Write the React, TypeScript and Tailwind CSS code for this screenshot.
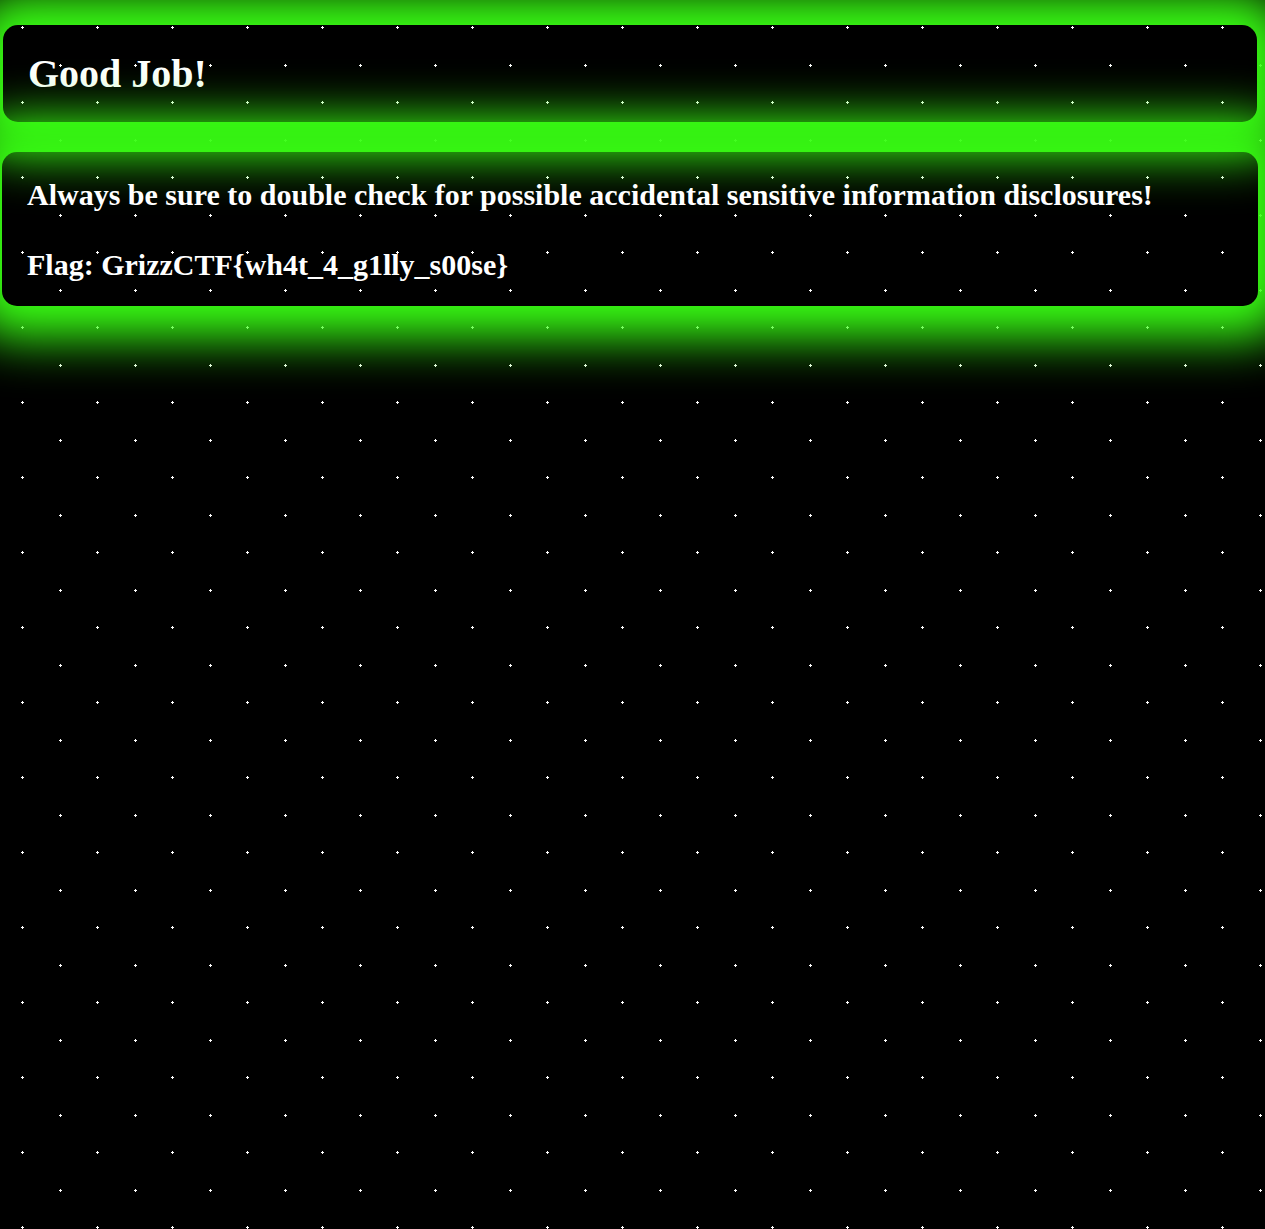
import React from "react";

function Stars() {
  return (
    <svg className="absolute inset-0 w-full h-full" aria-hidden="true">
      <defs>
        <pattern id="stars" patternUnits="userSpaceOnUse" width="75" height="75">
          <rect x="21" y="27" width="3" height="1" fill="#ffffff" shapeRendering="crispEdges" />
          <rect x="22" y="26" width="1" height="3" fill="#ffffff" shapeRendering="crispEdges" />
          <rect x="59" y="65" width="3" height="1" fill="#ffffff" shapeRendering="crispEdges" />
          <rect x="60" y="64" width="1" height="3" fill="#ffffff" shapeRendering="crispEdges" />
        </pattern>
      </defs>
      <rect width="100%" height="100%" fill="url(#stars)" />
    </svg>
  );
}

export default function App() {
  return (
    <div className="relative min-h-screen bg-black overflow-hidden font-['Liberation_Serif',serif] text-white pt-[25px]">
      <Stars />
      <div className="relative ml-[3px] mr-[8px] rounded-[15px] p-[25px] shadow-[0_0_50px_33px_#39ff14]">
        <h1 className="text-[40px] font-bold leading-[normal]">Good Job!</h1>
      </div>
      <div className="relative mt-[30px] ml-[2px] mr-[7px] rounded-[15px] pt-[25px] pb-[24px] px-[25px] shadow-[0_0_50px_33px_#39ff14]">
        <div className="text-[30px] font-bold leading-[35px]">
          Always be sure to double check for possible accidental sensitive information disclosures!
          <br />
          <br />
          Flag: GrizzCTF{"{"}wh4t_4_g1lly_s00se{"}"}
        </div>
      </div>
    </div>
  );
}
